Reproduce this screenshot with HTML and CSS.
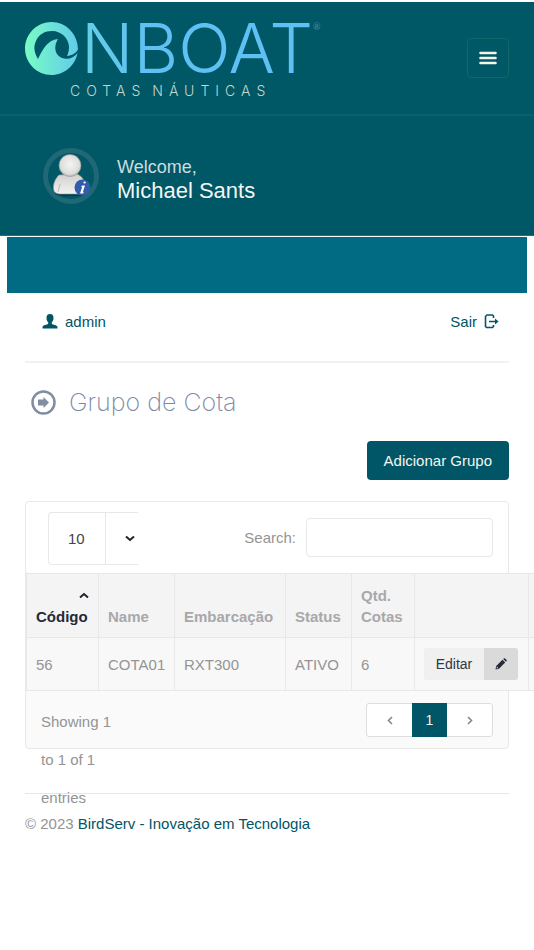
FILE: index.html
```html
<!DOCTYPE html>
<html lang="pt-BR">
<head>
<meta charset="utf-8">
<meta name="viewport" content="width=device-width, initial-scale=1">
<title>Grupo de Cota</title>
<link rel="stylesheet" href="styles.css">
</head>
<body>
<header class="sidebar">
  <div class="topbar">
    <a class="logo" href="#">
      <span class="logo-main">
        <svg class="logo-wave" viewBox="0 0 53 53" aria-hidden="true">
          <defs><linearGradient id="wave" x1="0" x2="1" y1="0" y2="0"><stop offset="0" stop-color="#79fcc4"/><stop offset="1" stop-color="#62cbea"/></linearGradient></defs>
          <path fill="url(#wave)" fill-rule="evenodd" d="M26.500 0C12 0 0 12 0 26.500S12 53 26.500 53C39.500 53 50.500 43 52.500 31C49 35.500 44 37.500 39.500 36.500C31 35.500 27.500 26 33 17C22 18 17.500 28 13 37C9.500 31 8 25 11 19C14 12 20 9 27 9C37 9 44 17 44 25C44 28 43.500 31 42 34C47 33.500 51 31 53 27.500C53 12 41 0 26.500 0Z"/>
        </svg>
        <span class="logo-word">NBOAT</span>
        <span class="logo-mark">®</span>
      </span>
      <span class="logo-sub"><span>COTAS</span> <span>NÁUTICAS</span></span>
    </a>
    <button class="menu-button" type="button" aria-label="Menu">
      <svg viewBox="0 0 18 14" width="18" height="14" aria-hidden="true"><path d="M1.500 2H16.500M1.500 7H16.500M1.500 12H16.500" stroke="#f4f5e8" stroke-width="2.600" stroke-linecap="round"/></svg>
    </button>
  </div>
  <div class="profile">
    <svg class="avatar" viewBox="0 0 56 56" aria-hidden="true">
      <defs>
        <radialGradient id="head" cx=".5" cy=".45" r=".6"><stop offset="0" stop-color="#f4f4f2"/><stop offset=".7" stop-color="#dededc"/><stop offset="1" stop-color="#aaa"/></radialGradient>
        <linearGradient id="torso" x1="0" x2="0" y1="0" y2="1"><stop offset="0" stop-color="#d0d0ce"/><stop offset="1" stop-color="#f2f2f0"/></linearGradient>
      </defs>
      <circle cx="28" cy="28" r="25.500" fill="none" stroke="#1f6875" stroke-width="5"/>
      <ellipse cx="27" cy="46" rx="15" ry="2" fill="#00404e"/>
      <path d="M16 27C12 31 10 36 10.500 41C11 45 14 46 18 46H38C43 46 44 43 43 38C42 33 39 28 34 26Z" fill="url(#torso)" stroke="#96928a" stroke-width=".6"/>
      <path d="M15 44L17 36" stroke="#bbb" fill="none"/>
      <circle cx="27" cy="17.500" r="11" fill="url(#head)" stroke="#96928a" stroke-width=".6"/>
      <circle cx="39.500" cy="39.500" r="8" fill="#335da9"/>
      <path d="M41.500 34.500h.2M39.500 38.500h1l-2 6h1" stroke="#fff" stroke-width="2.200" stroke-linecap="round" fill="none"/>
    </svg>
    <div class="profile-text">
      <span class="welcome">Welcome,</span>
      <strong class="user-name">Michael Sants</strong>
    </div>
  </div>
</header>
<div class="banner"></div>
<main class="content">
  <nav class="user-nav">
    <a href="#"><svg viewBox="0 0 16 15" width="16" height="15" aria-hidden="true"><path fill="currentColor" d="M8 0C5.500 0 4.500 1.500 4.500 4C4.500 6 5.200 7.500 6.200 8.300V9.800C5 11 1 10.700 .5 13V14.500H15.500V13C15 10.700 11 11 9.800 9.800V8.300C10.800 7.500 11.500 6 11.500 4C11.500 1.500 10.500 0 8 0Z"/></svg>admin</a>
    <a href="#">Sair<svg viewBox="0 0 15 15" width="15" height="15" aria-hidden="true"><path d="M9.500 4V2L8.500 1H3L1.500 2.500V12.500L2.500 13.500H8.500L9.500 12.500V11M5 7.500H12" stroke="currentColor" stroke-width="1.600" fill="none"/><path fill="currentColor" d="M11 4.500L14.500 7.500L11 10.500Z"/></svg></a>
  </nav>
  <h1 class="page-title">
    <svg viewBox="0 0 25 25" width="25" height="25" aria-hidden="true"><circle cx="12.500" cy="12.500" r="11" fill="none" stroke="#818da2" stroke-width="2.500"/><path fill="#818da2" d="M7 9.500H12.500V7L18 12.500L12.500 18V15.500H7Z"/></svg>
    Grupo de Cota
  </h1>
  <div class="actions"><button class="primary" type="button">Adicionar Grupo</button></div>
  <section class="panel">
    <div class="tools">
      <div class="length">
        <select class="length-select" aria-label="Registros por página"><option>10</option></select>
        <span class="length-arrow"><svg viewBox="0 0 10 7" width="10" height="7" aria-hidden="true"><path d="M1 1.500L5 5L9 1.500" fill="none" stroke="#20242e" stroke-width="2"/></svg></span>
      </div>
      <div class="search"><label for="search">Search:</label><input id="search" type="text"></div>
    </div>
    <table class="grid">
      <colgroup><col class="c-code"><col class="c-name"><col class="c-boat"><col class="c-status"><col class="c-qty"><col class="c-edit"><col class="c-more"></colgroup>
      <thead><tr>
        <th class="sorted"><svg viewBox="0 0 10 7" width="10" height="7" aria-hidden="true"><path d="M1 5.500L5 2L9 5.500" fill="none" stroke="#20242e" stroke-width="2"/></svg>Código</th>
        <th>Name</th><th>Embarcação</th><th>Status</th><th>Qtd. Cotas</th><th></th><th></th>
      </tr></thead>
      <tbody><tr>
        <td>56</td><td>COTA01</td><td>RXT300</td><td>ATIVO</td><td>6</td>
        <td><button class="edit" type="button"><span class="edit-text">Editar</span><span class="edit-icon"><svg viewBox="0 0 12 12" width="12" height="12" aria-hidden="true"><path fill="#252b38" fill-rule="evenodd" d="M.5 11.500L1.200 8L7.500 1.700L10.200 4.400L4 10.700ZM8.200 1L9 .3Q9.500 0 10 .4L11.600 2Q12 2.500 11.600 3L10.900 3.700ZM2 8.600L1.600 10.400L3.300 10Z"/></svg></span></button></td><td></td>
      </tr></tbody>
    </table>
    <div class="panel-foot">
      <p class="info">Showing 1 to 1 of 1 entries</p>
      <div class="pager">
        <button type="button" class="page" aria-label="Anterior"><svg viewBox="0 0 6 9" width="6" height="9" aria-hidden="true"><path d="M5 1L1.500 4.500L5 8" fill="none" stroke="#888" stroke-width="1.600"/></svg></button>
        <button type="button" class="page current">1</button>
        <button type="button" class="page" aria-label="Próxima"><svg viewBox="0 0 6 9" width="6" height="9" aria-hidden="true"><path d="M1 1L4.500 4.500L1 8" fill="none" stroke="#888" stroke-width="1.600"/></svg></button>
      </div>
    </div>
  </section>
  <footer class="footer">© 2023 <a href="#">BirdServ - Inovação em Tecnologia</a></footer>
</main>
</body>
</html>
```
FILE: styles.css
```css
* { box-sizing: border-box; }
body {
  margin: 0;
  background: #fff;
  color: #949494;
  font: 15px/21px "Liberation Sans", Arial, sans-serif;
}
a { color: #005566; text-decoration: none; }
button, input, select { font: inherit; margin: 0; }
svg { flex: none; }

.sidebar { margin-top: 2px; background: #005766; border-bottom: 1px solid #40636c; }
.topbar {
  display: flex;
  justify-content: space-between;
  align-items: center;
  height: 114px;
  padding: 0 25px;
  border-bottom: 2px solid #0b6069;
}
.logo { display: flex; flex-direction: column; gap: 6px; padding-top: 6px; }
.logo-main { display: flex; height: 54px; align-items: center; }
.logo-wave { width: 53px; height: 53px; }
.logo-word {
  margin-left: 3px;
  font: 300 69px/54px Inter, sans-serif;
  background: linear-gradient(90deg, #63cfe6, #5fc1f3 30%);
  background-clip: text;
  color: transparent;
}
.logo-mark { align-self: flex-start; color: #478fac; font: 9px/12px Lato, sans-serif; }
.logo-sub {
  display: flex;
  gap: 6px;
  padding-left: 45px;
  color: #c3d6ca;
  font: 300 14px/20px Inter, sans-serif;
  letter-spacing: 6px;
}
.menu-button {
  display: grid;
  place-items: center;
  width: 42px;
  height: 40px;
  padding: 0;
  border: 1px solid #12666a;
  border-radius: 4px;
  background: transparent;
}
.profile { display: flex; align-items: center; gap: 18px; height: 119px; padding: 0 43px; }
.avatar { width: 56px; height: 56px; }
.profile-text { display: flex; flex-direction: column; padding-top: 8px; }
.welcome { color: #ccdde0; font-size: 18px; line-height: 22px; }
.user-name { color: #f4f6f4; font-weight: 400; font-size: 22px; line-height: 25px; }

.banner { height: 56px; margin: 1px 7px 0; background: #006b83; }
.content { padding: 0 25px; overflow-x: clip; }
.user-nav {
  display: flex;
  justify-content: space-between;
  align-items: center;
  height: 70px;
  padding: 0 10px 12px 17px;
  border-bottom: 2px solid #f1f1f1;
}
.user-nav a { display: flex; align-items: center; gap: 7px; }
.page-title {
  display: flex;
  align-items: center;
  gap: 13px;
  height: 78px;
  margin: 0;
  padding-left: 6px;
  color: #7c89a5;
  font: 200 25px/32px Inter, sans-serif;
}
.actions { display: flex; justify-content: flex-end; margin-bottom: 21px; }
.primary {
  height: 39px;
  padding: 0 17px;
  border: 0;
  border-radius: 4px;
  background: #005566;
  color: #f4f5f0;
}

.panel { height: 248px; border: 1px solid #e8e8e8; border-radius: 4px; background: #fafafa; }
.tools {
  display: flex;
  justify-content: space-between;
  height: 71px;
  padding: 0 15px 0 22px;
  border-radius: 4px;
  background: #fff;
}
.length {
  display: flex;
  width: 90px;
  height: 53px;
  margin-top: 10px;
  border: 1px solid #e8e8e8;
  border-right: 0;
  border-radius: 4px 0 0 4px;
}
.length-select {
  width: 56px;
  padding: 0 0 0 19px;
  border: 0;
  appearance: none;
  background: transparent;
  color: #444;
}
.length-arrow { display: flex; flex: 1; align-items: center; padding-left: 19px; border-left: 1px solid #e8e8e8; }
.search { display: flex; align-items: center; gap: 10px; }
.search input {
  width: 187px;
  height: 39px;
  padding: 0 10px;
  border: 1px solid #e8e8e8;
  border-radius: 4px;
  background: #fff;
}

.grid { width: 582px; table-layout: fixed; border-collapse: collapse; background: #f8f8f8; }
.c-code { width: 72px; }
.c-name { width: 76px; }
.c-boat { width: 111px; }
.c-status { width: 66px; }
.c-qty { width: 63px; }
.c-edit { width: 114px; }
.c-more { width: 80px; }
.grid th, .grid td { border: 1px solid #e8e8e8; padding: 0 9px; text-align: left; }
.grid th {
  height: 64px;
  padding-bottom: 10px;
  background: #f4f4f4;
  color: #a8a8aa;
  vertical-align: bottom;
}
.grid td { height: 53px; }
.grid .sorted { color: #242a38; }
.sorted svg { display: block; margin: 0 0 7px auto; }
.edit { display: flex; width: 94px; height: 32px; padding: 0; border: 0; border-radius: 3px; overflow: hidden; background: #f0f0f0; color: #303644; }
.edit-text { flex: 1; font-size: 14px; line-height: 32px; }
.edit-icon { display: grid; place-items: center; width: 34px; height: 32px; background: #dadadb; }

.panel-foot { display: flex; justify-content: space-between; align-items: flex-start; padding: 12px 15px 0; }
.info { width: 80px; margin: 0; line-height: 38px; }
.pager { display: flex; height: 34px; border: 1px solid #dedede; border-radius: 3px; background: #fff; }
.page { display: grid; place-items: center; width: 45px; padding: 0; border: 0; background: transparent; }
.page.current { width: 35px; margin: -1px 0; background: #005566; color: #f4f5f0; font-size: 14px; }

.footer { margin-top: 44px; padding-top: 19px; border-top: 1px solid #e6e6e6; }
```
